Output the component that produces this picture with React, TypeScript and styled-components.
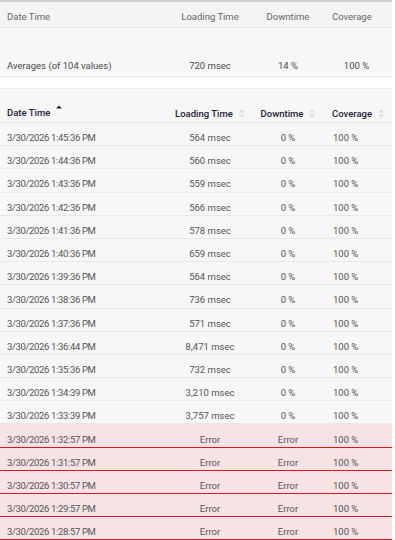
import styled, { createGlobalStyle } from "styled-components";

const GlobalStyle = createGlobalStyle`
  body {
    margin: 0;
    background: #fff;
    font-family: Roboto, "Liberation Sans", sans-serif;
  }
`;

interface Row {
  time: string;
  loading: string;
  downtime: string;
  coverage: string;
  error?: boolean;
}

const rows: Row[] = [
  { time: "3/30/2026 1:45:36 PM", loading: "564 msec", downtime: "0 %", coverage: "100 %" },
  { time: "3/30/2026 1:44:36 PM", loading: "560 msec", downtime: "0 %", coverage: "100 %" },
  { time: "3/30/2026 1:43:36 PM", loading: "559 msec", downtime: "0 %", coverage: "100 %" },
  { time: "3/30/2026 1:42:36 PM", loading: "566 msec", downtime: "0 %", coverage: "100 %" },
  { time: "3/30/2026 1:41:36 PM", loading: "578 msec", downtime: "0 %", coverage: "100 %" },
  { time: "3/30/2026 1:40:36 PM", loading: "659 msec", downtime: "0 %", coverage: "100 %" },
  { time: "3/30/2026 1:39:36 PM", loading: "564 msec", downtime: "0 %", coverage: "100 %" },
  { time: "3/30/2026 1:38:36 PM", loading: "736 msec", downtime: "0 %", coverage: "100 %" },
  { time: "3/30/2026 1:37:36 PM", loading: "571 msec", downtime: "0 %", coverage: "100 %" },
  { time: "3/30/2026 1:36:44 PM", loading: "8,471 msec", downtime: "0 %", coverage: "100 %" },
  { time: "3/30/2026 1:35:36 PM", loading: "732 msec", downtime: "0 %", coverage: "100 %" },
  { time: "3/30/2026 1:34:39 PM", loading: "3,210 msec", downtime: "0 %", coverage: "100 %" },
  { time: "3/30/2026 1:33:39 PM", loading: "3,757 msec", downtime: "0 %", coverage: "100 %" },
  { time: "3/30/2026 1:32:57 PM", loading: "Error", downtime: "Error", coverage: "100 %", error: true },
  { time: "3/30/2026 1:31:57 PM", loading: "Error", downtime: "Error", coverage: "100 %", error: true },
  { time: "3/30/2026 1:30:57 PM", loading: "Error", downtime: "Error", coverage: "100 %", error: true },
  { time: "3/30/2026 1:29:57 PM", loading: "Error", downtime: "Error", coverage: "100 %", error: true },
  { time: "3/30/2026 1:28:57 PM", loading: "Error", downtime: "Error", coverage: "100 %", error: true },
];

function SortIcon({ active }: { active?: boolean }) {
  return (
    <SortArrows viewBox="0 0 6 9" width="6" height="9" $active={active}>
      <path d="M0 3.5 L3 0.5 L6 3.5 Z" fill={active ? "#222" : "#ddd"} />
      {!active && <path d="M0 5.5 L3 8.5 L6 5.5 Z" fill="#ddd" />}
    </SortArrows>
  );
}

export default function App() {
  return (
    <>
      <GlobalStyle />
      <Page>
        <TopShadow />
        <SummaryHead>
          <Cell>Date Time</Cell>
          <Cell $align="center">Loading Time</Cell>
          <Cell $align="center">Downtime</Cell>
          <Cell $pad={11}>Coverage</Cell>
        </SummaryHead>
        <AveragesRow>
          <Cell>Averages (of 104 values)</Cell>
          <Cell $align="center">720 msec</Cell>
          <Cell $align="center">14 %</Cell>
          <Cell $align="center">100 %</Cell>
        </AveragesRow>
        <Spacer />
        <DataHead>
          <HeadCell>
            Date Time
            <SortIcon active />
          </HeadCell>
          <HeadCell $align="center">
            Loading Time
            <SortIcon />
          </HeadCell>
          <HeadCell $align="center">
            Downtime
            <SortIcon />
          </HeadCell>
          <HeadCell $pad={11}>
            Coverage
            <SortIcon />
          </HeadCell>
        </DataHead>
        {rows.map((r) => (
          <DataRow key={r.time} $error={r.error}>
            <DateCell>{r.time}</DateCell>
            <Cell $align="center">{r.loading}</Cell>
            <Cell $align="center">{r.downtime}</Cell>
            <Cell $pad={12}>{r.coverage}</Cell>
          </DataRow>
        ))}
      </Page>
    </>
  );
}

const Page = styled.div`
  width: 392px;
  font-size: 9.5px;
  color: #555;
`;

const TopShadow = styled.div`
  height: 2px;
  background: #cfcfcf;
`;

const Columns = styled.div`
  display: grid;
  grid-template-columns: 165px 90px 66px 71px;
  box-sizing: border-box;
`;

const SummaryHead = styled(Columns)`
  height: 26px;
  align-items: center;
  padding-top: 3px;
  background: #f4f4f4;
  border-bottom: 1px solid #e7e7e7;
  color: #666;
`;

const AveragesRow = styled(Columns)`
  height: 49px;
  align-items: end;
  padding-bottom: 5px;
  background: #f7f7f7;
  border-bottom: 1px solid #e7e7e7;
  color: #4e4a44;
`;

const Spacer = styled.div`
  height: 11px;
  background: #fff;
`;

const DataHead = styled(Columns)`
  height: 35px;
  align-items: end;
  padding-bottom: 3px;
  background: #f7f7f7;
  border-top: 1px solid #e7e7e7;
  border-bottom: 1px solid #e4e4e4;
  color: #1c2238;
  font-weight: 500;
`;

const DataRow = styled(Columns)<{ $error?: boolean }>`
  height: 23.2px;
  align-items: center;
  padding-top: 7px;
  background: ${(p) => (p.$error ? "#f6e3e4" : "#f7f7f7")};
  border-bottom: 1px solid ${(p) => (p.$error ? "#e0141b" : "#e8e8e8")};
`;

const Cell = styled.div<{ $align?: "left" | "center"; $pad?: number }>`
  text-align: ${(p) => p.$align ?? "left"};
  padding-left: ${(p) => (p.$align === "center" ? 0 : p.$pad ?? 7)}px;
  white-space: nowrap;
`;

const DateCell = styled(Cell)`
  letter-spacing: -0.35px;
`;

const HeadCell = styled.div<{ $align?: "left" | "center"; $pad?: number }>`
  display: flex;
  align-items: center;
  gap: 6px;
  justify-content: ${(p) => (p.$align === "center" ? "center" : "flex-start")};
  padding-left: ${(p) => (p.$align === "center" ? 0 : p.$pad ?? 7)}px;
  white-space: nowrap;
`;

const SortArrows = styled.svg<{ $active?: boolean }>`
  display: block;
  flex: none;
  margin-bottom: ${(p) => (p.$active ? 5 : 1)}px;
`;
